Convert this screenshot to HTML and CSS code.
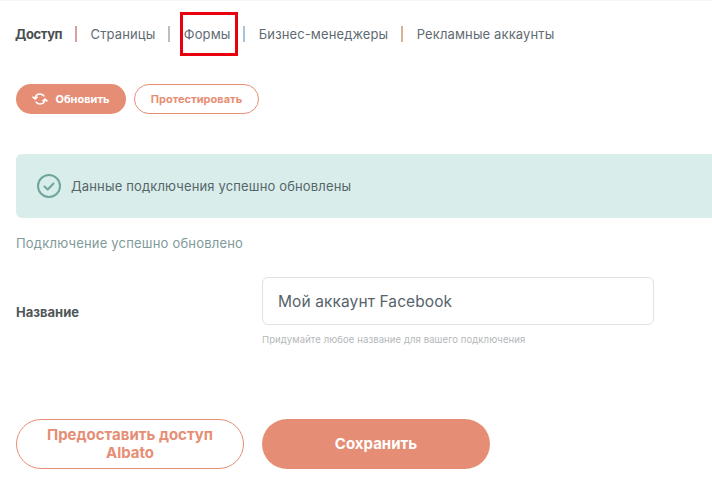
FILE: index.html
```html
<!DOCTYPE html>
<html>
<head lang="en">
    <meta charset="UTF-8">
    <title>Доступ</title>
    <link rel="stylesheet" href="styles.css">
</head>
<body>
<div class="page">
    <div class="tabs">
        <a class="tab active">Доступ</a>
        <i class="sep sep-red"></i>
        <a class="tab">Страницы</a>
        <i class="sep"></i>
        <a class="tab">Формы</a>
        <i class="sep sep-blue"></i>
        <a class="tab">Бизнес-менеджеры</a>
        <i class="sep sep-tan"></i>
        <a class="tab">Рекламные аккаунты</a>
    </div>
    <div class="highlight"></div>

    <div class="actions">
        <button class="btn btn-fill">
            <svg class="refresh" width="16" height="14" viewBox="0 0 16 14" fill="none" stroke="#fff" stroke-width="1.6" stroke-linecap="round" stroke-linejoin="round">
                <path d="M3 6.5C3.4 3.8 5.5 2 8 2c1.6 0 2.9.7 3.8 1.8"/>
                <path d="M13 7.5c-.4 2.7-2.5 4.5-5 4.5-1.6 0-2.9-.7-3.8-1.8"/>
                <path d="M1 5.2 3 7l2-1.8"/>
                <path d="M11 8.8 13 7l2 1.8"/>
            </svg>
            Обновить
        </button>
        <button class="btn btn-line">Протестировать</button>
    </div>

    <div class="alert">
        <svg width="26" height="26" viewBox="0 0 26 26" fill="none" stroke="#6fa49f" stroke-width="2" stroke-linecap="round" stroke-linejoin="round">
            <circle cx="13" cy="13" r="11"/>
            <path d="M8.5 13.5l3.2 3 5.8-6"/>
        </svg>
        <span>Данные подключения успешно обновлены</span>
    </div>

    <p class="note">Подключение успешно обновлено</p>

    <div class="field">
        <label class="field-name">Название</label>
        <div class="field-body">
            <div class="input">Мой аккаунт Facebook</div>
            <p class="hint">Придумайте любое название для вашего подключения</p>
        </div>
    </div>

    <div class="footer">
        <button class="big big-line">Предоставить доступ Albato</button>
        <button class="big big-fill">Сохранить</button>
    </div>
</div>
</body>
</html>
```

FILE: styles.css
```css
* {
    margin: 0;
    padding: 0;
    box-sizing: border-box;
}

html, body {
    height: 100%;
    overflow: hidden;
    background: #fff;
}

body {
    font-family: "Inter", "Noto Sans", sans-serif;
    color: #4f5b62;
}

.page {
    position: relative;
    width: 712px;
    height: 495px;
    padding: 24px 0 0 16px;
    overflow: hidden;
    border-top: 1px solid #f7f7f7;
}

.tabs {
    display: flex;
    align-items: center;
    height: 17px;
    font-size: 13px;
    letter-spacing: 0.12px;
}

.tab {
    color: #5f6b72;
}

.tab.active {
    margin-left: -1px;
    color: #4a4f52;
    font-weight: 700;
    letter-spacing: -0.4px;
}

.sep {
    width: 2px;
    height: 16px;
    margin: 0 14px 0 12.4px;
    background: #b9bec2;
}

.sep-red {
    background: #d9a0a0;
}

.sep-blue {
    background: #a9c3dc;
}

.sep-tan {
    background: #d6b596;
}

.highlight {
    position: absolute;
    left: 180px;
    top: 11px;
    width: 58px;
    height: 44px;
    border: 3px solid #e8000f;
}

.actions {
    display: flex;
    gap: 8px;
    margin-top: 42px;
}

.btn {
    display: flex;
    align-items: center;
    justify-content: center;
    height: 30px;
    border-radius: 15px;
    font-family: inherit;
    font-size: 11px;
    font-weight: 700;
}

.btn-fill {
    gap: 7px;
    width: 110px;
    border: 0;
    background: #e68e75;
    color: #fff;
}

.btn-line {
    width: 125px;
    border: 1px solid #e68e75;
    background: #fff;
    color: #e68e75;
}

.alert {
    display: flex;
    align-items: center;
    gap: 9px;
    width: 760px;
    height: 64px;
    margin-top: 40px;
    padding-left: 20px;
    border-radius: 6px;
    background: #d9edeb;
    font-size: 13px;
    letter-spacing: 0.15px;
    color: #56656a;
}

.note {
    margin-top: 17px;
    font-size: 13px;
    line-height: 17px;
    letter-spacing: 0.2px;
    color: #7f9a9a;
}

.field {
    display: flex;
    margin-top: 25px;
}

.field-name {
    width: 246px;
    padding-top: 27px;
    font-size: 13px;
    font-weight: 700;
    color: #4f5659;
}

.field-body {
    width: 392px;
}

.input {
    display: flex;
    align-items: center;
    height: 48px;
    padding-left: 15px;
    border: 1px solid #e2e2e2;
    border-radius: 6px;
    font-size: 15.5px;
    letter-spacing: 0.1px;
    color: #56636b;
}

.hint {
    margin-top: 9px;
    font-size: 9.5px;
    line-height: 11px;
    letter-spacing: 0.1px;
    color: #b4b8ba;
}

.footer {
    display: flex;
    gap: 18px;
    margin-top: 74px;
}

.big {
    width: 228px;
    height: 50px;
    border-radius: 25px;
    font-family: inherit;
    font-size: 15px;
    font-weight: 700;
    line-height: 18px;
}

.big-line {
    padding: 0 24px;
    border: 1px solid #e68e75;
    background: #fff;
    color: #e68e75;
}

.big-fill {
    border: 0;
    background: #e68e75;
    color: #fff;
}
```
